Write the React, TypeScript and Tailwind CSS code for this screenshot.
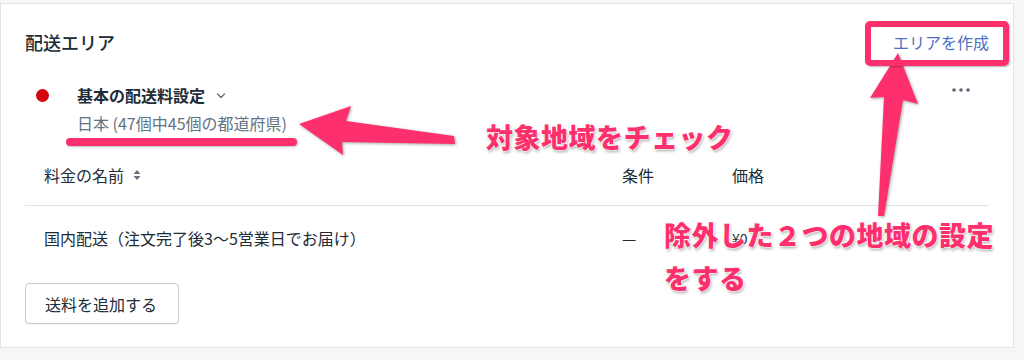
import React from "react";

const pink = "#fe2f6d";

const SortIcon = () => (
  <svg width="8" height="12" viewBox="0 0 8 12" className="ml-[9px]">
    <path d="M4 1 L7.5 5 L0.5 5 Z" fill="#637381" />
    <path d="M4 11 L7.5 7 L0.5 7 Z" fill="#637381" />
  </svg>
);

const Chevron = () => (
  <svg width="10" height="8" viewBox="0 0 10 8" className="ml-[11px] mt-[2px]">
    <path d="M1.5 2 L5 5.5 L8.5 2" fill="none" stroke="#637381" strokeWidth="1.4" strokeLinecap="round" />
  </svg>
);

const MoreIcon = () => (
  <svg width="18" height="4" viewBox="0 0 18 4">
    <circle cx="2" cy="2" r="1.8" fill="#5c6773" />
    <circle cx="9" cy="2" r="1.8" fill="#5c6773" />
    <circle cx="16" cy="2" r="1.8" fill="#5c6773" />
  </svg>
);

const Annotations = () => (
  <>
    {/* arrows */}
    <svg
      width="1024"
      height="360"
      viewBox="0 0 1024 360"
      className="absolute left-0 top-0 pointer-events-none [filter:drop-shadow(1px_1px_1.5px_rgba(0,0,0,0.35))]"
    >
      <polygon
        points="299,124 351,106 346,121 454,136 455,144 342,142 343,155"
        fill={pink}
      />
      <polygon
        points="898,53 918,104 903,100 884,216 878,216 884,97 870,98"
        fill={pink}
      />
    </svg>

    {/* box round the link */}
    <div className="absolute left-[865px] top-[21px] w-[144px] h-[45px] border-[6px] border-[#fe2f6d] rounded-[5px] [box-shadow:1px_1px_2px_rgba(0,0,0,0.3)]" />

    {/* underline */}
    <div className="absolute left-[66px] top-[138px] w-[231px] h-[8px] rounded-full bg-[#fe2f6d] [box-shadow:1px_1px_2px_rgba(0,0,0,0.25)]" />

    <div className="absolute left-[486px] top-[118px] text-[27px] leading-[38px] font-black tracking-[0.5px] text-[#fe2f6d] whitespace-nowrap [text-shadow:0_0_2px_#fff,0_0_2px_#fff,0_0_2px_#fff,1px_2px_3px_rgba(0,0,0,0.35)]">
      対象地域をチェック
    </div>

    <div className="absolute left-[664px] top-[213px] text-[27px] leading-[43px] font-black tracking-[0.5px] text-[#fe2f6d] whitespace-nowrap [text-shadow:0_0_2px_#fff,0_0_2px_#fff,0_0_2px_#fff,1px_2px_3px_rgba(0,0,0,0.35)]">
      <div>除外した２つの地域の設定</div>
      <div>をする</div>
    </div>
  </>
);

export default function App() {
  return (
    <div
      className="relative w-[1024px] h-[360px] overflow-hidden bg-[#f4f6f8] pt-[3px] text-[#212b36]"
      style={{ fontFamily: '"Noto Sans CJK JP", "Noto Sans", sans-serif' }}
    >
      <div className="w-[1014px] h-[345px] bg-white border border-[#e1e4e8] px-6 pt-[26px]">
        {/* header */}
        <div className="flex items-center justify-between h-6">
          <h2 className="text-[18px] leading-6 font-medium">配送エリア</h2>
          <a className="text-[16px] leading-6 text-[#4b71c4]">エリアを作成</a>
        </div>

        {/* area */}
        <div className="flex items-start mt-[27px]">
          <span className="ml-[11px] mt-[8px] w-[13px] h-[13px] rounded-full bg-[#d40511]" />
          <div className="ml-[28px] flex flex-col">
            <div className="flex items-center h-[28px]">
              <span className="text-[16px] font-bold">基本の配送料設定</span>
              <Chevron />
            </div>
            <div className="h-[28px] flex items-center text-[16px] text-[#637381]">
              日本 (47個中45個の都道府県)
            </div>
          </div>
          <div className="ml-auto mr-[19px] mt-[7px]">
            <MoreIcon />
          </div>
        </div>

        {/* rates table */}
        <div className="mt-[26px]">
          <div className="grid grid-cols-[578px_110px_1fr] pl-[19px] pb-[18px] text-[16px] leading-6 border-b border-[#dfe3e8]">
            <div className="flex items-center">
              料金の名前
              <SortIcon />
            </div>
            <div>条件</div>
            <div>価格</div>
          </div>
          <div className="grid grid-cols-[578px_110px_1fr] pl-[19px] pt-[20px] text-[16px] leading-6">
            <div>国内配送（注文完了後3〜5営業日でお届け）</div>
            <div>—</div>
            <div className="text-[14px]">¥0</div>
          </div>
        </div>

        <button className="mt-[33px] w-[154px] h-[41px] border border-[#c4cdd5] rounded-[4px] bg-white text-[16px] text-left pl-[19px] [box-shadow:0_1px_0_rgba(22,29,37,0.05)]">
          送料を追加する
        </button>
      </div>

      <Annotations />
    </div>
  );
}
